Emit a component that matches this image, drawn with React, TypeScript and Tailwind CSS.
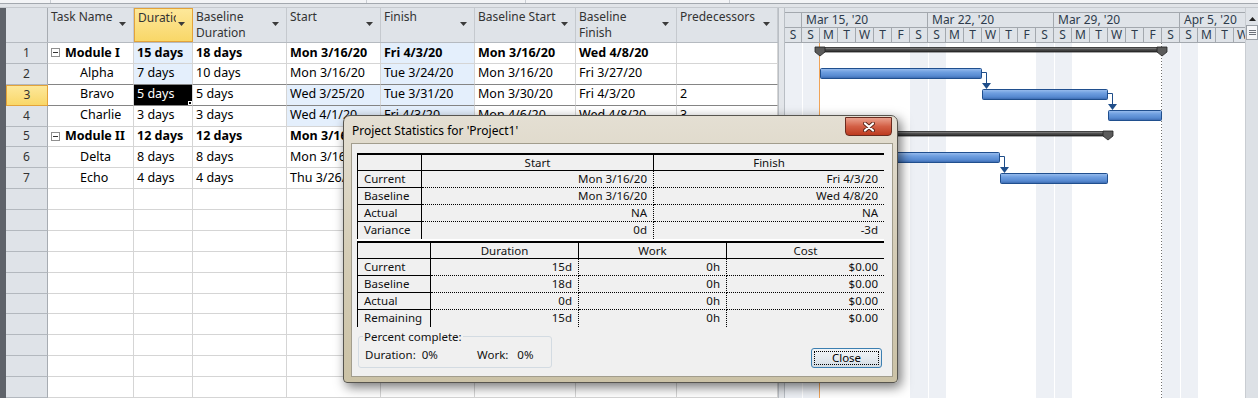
import React from 'react';

type Task = {
  id: number;
  name: string;
  summary?: boolean;
  cells: string[];
  blue: number[];
};

const tasks: Task[] = [
  { id: 1, name: 'Module I', summary: true, cells: ['15 days', '18 days', 'Mon 3/16/20', 'Fri 4/3/20', 'Mon 3/16/20', 'Wed 4/8/20', ''], blue: [0, 3] },
  { id: 2, name: 'Alpha', cells: ['7 days', '10 days', 'Mon 3/16/20', 'Tue 3/24/20', 'Mon 3/16/20', 'Fri 3/27/20', ''], blue: [0, 3] },
  { id: 3, name: 'Bravo', cells: ['5 days', '5 days', 'Wed 3/25/20', 'Tue 3/31/20', 'Mon 3/30/20', 'Fri 4/3/20', '2'], blue: [2, 3] },
  { id: 4, name: 'Charlie', cells: ['3 days', '3 days', 'Wed 4/1/20', 'Fri 4/3/20', 'Mon 4/6/20', 'Wed 4/8/20', '3'], blue: [2, 3] },
  { id: 5, name: 'Module II', summary: true, cells: ['12 days', '12 days', 'Mon 3/16/20', 'Tue 3/31/20', 'Mon 3/16/20', 'Tue 3/31/20', ''], blue: [] },
  { id: 6, name: 'Delta', cells: ['8 days', '8 days', 'Mon 3/16/20', 'Wed 3/25/20', 'Mon 3/16/20', 'Wed 3/25/20', ''], blue: [] },
  { id: 7, name: 'Echo', cells: ['4 days', '4 days', 'Thu 3/26/20', 'Tue 3/31/20', 'Thu 3/26/20', 'Tue 3/31/20', '6'], blue: [] },
];

const dataCols = ['w-[59px]', 'w-[94px]', 'w-[94px]', 'w-[94px]', 'w-[101px]', 'w-[101px]', 'w-[101px]'];
const headCols = ['w-[86px]', ...dataCols];
const headers = [['Task Name'], ['Duration'], ['Baseline', 'Duration'], ['Start'], ['Finish'], ['Baseline Start'], ['Baseline', 'Finish'], ['Predecessors']];

function Caret() {
  return (
    <svg width="7" height="4" viewBox="0 0 7 4">
      <polygon points="0,0 7,0 3.5,4" fill="#3a3a3a" />
    </svg>
  );
}

function TopStrip() {
  return (
    <div className="h-[8px] flex flex-col">
      <div className="h-[3px] bg-[#f3f4f6] flex">
        <div className="w-[51px] border-r border-[#c9cdd2]" />
        <div className="w-[316px] border-r border-[#c9cdd2]" />
        <div className="w-[159px] border-r border-[#c9cdd2]" />
        <div className="w-[204px] border-r border-[#c9cdd2]" />
      </div>
      <div className="h-[1px] bg-[#a3a8ae]" />
      <div className="h-[3px] bg-[#e1e4e8]" />
      <div className="h-[1px] bg-[#c5c9ce]" />
    </div>
  );
}

function HeaderCell({ w, lines, active }: { w: string; lines: string[]; active?: boolean }) {
  return (
    <div
      className={`${w} shrink-0 h-full flex ${
        active
          ? 'border border-[#e3a33a] bg-gradient-to-b from-[#fde89a] to-[#f9d767]'
          : 'border-r border-[#c5c9ce]'
      }`}
    >
      <div className="flex-1 min-w-0 overflow-hidden whitespace-nowrap pl-[3px] pt-[1px] leading-[16px] text-[12px] text-[#333]">
        {lines.map((l) => (
          <div key={l}>{l}</div>
        ))}
      </div>
      <div className="flex items-center pl-[2px] pr-[7px] pb-[2px]">
        <Caret />
      </div>
    </div>
  );
}

function TaskRow({ t }: { t: Task }) {
  const sel = t.id === 3;
  const dark = t.id === 2 || t.id === 3;
  const rowB = dark ? 'border-b-[#858585]' : 'border-b-[#d5d5d5]';
  return (
    <div className={`flex h-[21px] text-[12.5px] ${t.summary ? 'font-bold' : ''}`}>
      <div
        className={`w-[42px] shrink-0 flex items-center justify-center font-normal text-[12px] text-[#333] ${
          sel
            ? 'border border-[#e3a33a] bg-gradient-to-b from-[#fde89a] to-[#f9d767]'
            : 'bg-[#dfe3e8] border-r border-b border-r-[#a7acb2] border-b-[#b3b8be]'
        }`}
      >
        {t.id}
      </div>
      <div className={`w-[86px] shrink-0 h-full flex items-center whitespace-nowrap overflow-hidden border-r border-b border-r-[#d5d5d5] ${rowB} ${t.summary ? 'pl-[3px]' : 'pl-[32px]'}`}>
        {t.summary && (
          <span className="w-[9px] h-[9px] border border-[#8f8f8f] bg-white flex items-center justify-center mr-[5px]">
            <span className="w-[5px] h-[1px] bg-[#333]" />
          </span>
        )}
        {t.name}
      </div>
      {t.cells.map((c, i) => {
        const picked = sel && i === 0;
        const blue = t.blue.includes(i);
        return (
          <div
            key={i}
            className={`${dataCols[i]} shrink-0 h-full relative flex items-center whitespace-nowrap overflow-hidden pl-[3px] border-r border-b border-r-[#d5d5d5] ${rowB} ${
              picked ? 'bg-black text-white' : blue ? 'bg-[#e4effc]' : ''
            }`}
          >
            {c}
            {picked && <span className="absolute right-0 bottom-0 w-[4px] h-[4px] bg-black border border-white" />}
          </div>
        );
      })}
    </div>
  );
}

function BlankRow() {
  return (
    <div className="flex h-[21px]">
      <div className="w-[42px] shrink-0 bg-[#dfe3e8] border-r border-b border-r-[#a7acb2] border-b-[#b3b8be]" />
      {headCols.map((w, i) => (
        <div key={i} className={`${w} shrink-0 h-full border-r border-b border-[#d5d5d5]`} />
      ))}
    </div>
  );
}

function Grid() {
  return (
    <div className="w-[772px] shrink-0 flex flex-col overflow-hidden">
      <div className="flex h-[35px] shrink-0 bg-[#dfe3e8] border-b border-[#b5bac0]">
        <div className="w-[42px] shrink-0 border-r border-[#a7acb2]" />
        {headers.map((h, i) => (
          <HeaderCell key={i} w={headCols[i]} lines={h} active={i === 1} />
        ))}
      </div>
      {tasks.map((t) => (
        <TaskRow key={t.id} t={t} />
      ))}
      {Array.from({ length: 10 }).map((_, i) => (
        <BlankRow key={i} />
      ))}
    </div>
  );
}

const weeks = ["Mar 15, '20", "Mar 22, '20", "Mar 29, '20", "Apr 5, '20"];
const dayLetters = ['S', 'M', 'T', 'W', 'T', 'F', 'S'];

function TaskBar({ x1, x2, y }: { x1: number; x2: number; y: number }) {
  return <rect x={x1 + 0.5} y={y + 0.5} width={x2 - x1 - 1} height={10} rx={1} fill="url(#taskGrad)" stroke="#204f8e" />;
}

function SummaryBar({ x1, x2, y }: { x1: number; x2: number; y: number }) {
  const cap = (x: number) => `${x - 5},${y} ${x + 5},${y} ${x + 5},${y + 5} ${x},${y + 9} ${x - 5},${y + 5}`;
  return (
    <g>
      <rect x={x1} y={y + 0.5} width={x2 - x1} height={4.5} fill="url(#sumGrad)" stroke="#222" strokeWidth={0.8} />
      <polygon points={cap(x1)} fill="#5b5b5b" stroke="#222" strokeWidth={0.8} />
      <polygon points={cap(x2)} fill="#5b5b5b" stroke="#222" strokeWidth={0.8} />
    </g>
  );
}

function Link({ x, y1, y2 }: { x: number; y1: number; y2: number }) {
  return (
    <g>
      <path d={`M${x - 5} ${y1 + 0.5} H${x + 0.5} V${y2 - 5}`} stroke="#1f4e8a" fill="none" />
      <polygon points={`${x - 4},${y2 - 6} ${x + 5},${y2 - 6} ${x + 0.5},${y2}`} fill="#1f4e8a" />
    </g>
  );
}

function Gantt() {
  // days: Sun Mar 15 = day 0, starts 17px into the chart, 18px per day
  const dx = (k: number) => 17 + 18 * k;
  const weekend = [-1, 0, 6, 7, 13, 14, 20, 21];
  return (
    <div className="w-[460px] shrink-0 flex flex-col overflow-hidden">
      <div className="h-[35px] shrink-0 bg-[#dfe3e8] pt-[4px] text-[12px] text-[#2d3b4c]">
        <div className="flex h-[16px] border-t border-b border-[#a3a8ae]">
          <div className="w-[17px] shrink-0 border-r border-[#a3a8ae]" />
          {weeks.map((w) => (
            <div key={w} className="w-[126px] shrink-0 border-r border-[#a3a8ae] pl-[4px] leading-[14px] whitespace-nowrap">
              {w}
            </div>
          ))}
        </div>
        <div className="flex h-[15px] border-b border-[#a3a8ae]">
          <div className="w-[17px] shrink-0 border-r border-[#a3a8ae] text-center leading-[14px]">S</div>
          {Array.from({ length: 25 }).map((_, i) => (
            <div key={i} className="w-[18px] shrink-0 border-r border-[#a3a8ae] text-center leading-[14px]">
              {dayLetters[i % 7]}
            </div>
          ))}
        </div>
      </div>
      <svg width="460" height="355" className="block">
        <defs>
          <linearGradient id="taskGrad" x1="0" y1="0" x2="0" y2="1">
            <stop offset="0" stopColor="#9cbfee" />
            <stop offset="0.35" stopColor="#6f9fe0" />
            <stop offset="0.75" stopColor="#5689d0" />
            <stop offset="1" stopColor="#3966ab" />
          </linearGradient>
          <linearGradient id="sumGrad" x1="0" y1="0" x2="0" y2="1">
            <stop offset="0" stopColor="#9a9a9a" />
            <stop offset="0.45" stopColor="#4e4e4e" />
            <stop offset="1" stopColor="#2a2a2a" />
          </linearGradient>
        </defs>
        {weekend.map((k) => (
          <rect key={k} x={k === -1 ? 0 : dx(k)} y={0} width={k === -1 ? 17 : 18} height={355} fill="#edf0f5" />
        ))}
        {[17, 143, 269, 395].map((x) => (
          <rect key={x} x={x} y={0} width={1} height={355} fill="#ffffff" />
        ))}
        <line x1={34.5} y1={0} x2={34.5} y2={355} stroke="#f0a458" />
        <line x1={376.5} y1={0} x2={376.5} y2={355} stroke="#6f6f6f" strokeDasharray="1 2" />
        <SummaryBar x1={35} x2={377} y={4} />
        <TaskBar x1={35} x2={197} y={25} />
        <Link x={201} y1={29} y2={46} />
        <TaskBar x1={197} x2={323} y={46} />
        <Link x={327} y1={50} y2={67} />
        <TaskBar x1={323} x2={377} y={67} />
        <SummaryBar x1={35} x2={323} y={88} />
        <TaskBar x1={35} x2={215} y={109} />
        <Link x={219} y1={113} y2={130} />
        <TaskBar x1={215} x2={323} y={130} />
      </svg>
    </div>
  );
}

function Scrollbar() {
  return (
    <div className="w-[13px] shrink-0 flex flex-col bg-[#dfe3e8] border-l border-[#c9cdd2]">
      <div className="h-[4px]" />
      <div className="h-[13px] flex items-center justify-center">
        <svg width="7" height="4" viewBox="0 0 7 4">
          <polygon points="0,4 7,4 3.5,0" fill="#222" />
        </svg>
      </div>
      <div className="h-[15px] border border-[#9aa0a7] bg-[#f5f6f8] flex flex-col items-center justify-center gap-[1px]">
        <span className="w-[7px] h-[1px] bg-[#6b7079]" />
        <span className="w-[7px] h-[1px] bg-[#6b7079]" />
        <span className="w-[7px] h-[1px] bg-[#6b7079]" />
      </div>
      <div className="flex-1 bg-[#dde1e6]" />
    </div>
  );
}

function StatRow({ label, values, widths, last }: { label: string; values: string[]; widths: string[]; last?: boolean }) {
  return (
    <div className="flex h-[17px]">
      <div className={`${widths[0]} shrink-0 pl-[6px] leading-[16px] border-r border-black ${last ? '' : 'border-b'}`}>{label}</div>
      {values.map((v, i) => (
        <div
          key={i}
          className={`${widths[i + 1]} shrink-0 text-right pr-[6px] leading-[16px] border-dotted border-black ${
            i < values.length - 1 ? 'border-r' : ''
          } ${last ? '' : 'border-b'}`}
        >
          {v}
        </div>
      ))}
    </div>
  );
}

function StatTable({ heads, widths, rows }: { heads: string[]; widths: string[]; rows: [string, string[]][] }) {
  return (
    <div className="w-[527px] bg-[#f0f0f0] border-l border-black">
      <div className="flex h-[18px] border-t-2 border-b border-black">
        <div className={`${widths[0]} shrink-0 border-r border-black`} />
        {heads.map((h, i) => (
          <div key={h} className={`${widths[i + 1]} shrink-0 text-center leading-[15px] ${i < heads.length - 1 ? 'border-r border-black' : ''}`}>
            {h}
          </div>
        ))}
      </div>
      {rows.map(([l, v], i) => (
        <StatRow key={l} label={l} values={v} widths={widths} last={i === rows.length - 1} />
      ))}
    </div>
  );
}

function CloseX() {
  return (
    <svg width="12" height="10" viewBox="0 0 12 10">
      <path d="M2 1.5 L10 8.5 M10 1.5 L2 8.5" stroke="#5a2418" strokeWidth="4" strokeLinecap="round" />
      <path d="M2 1.5 L10 8.5 M10 1.5 L2 8.5" stroke="#ffffff" strokeWidth="2.2" strokeLinecap="round" />
    </svg>
  );
}

function StatsDialog() {
  return (
    <div className="absolute left-[343px] top-[115px] w-[555px] h-[268px] flex flex-col rounded-t-[7px] rounded-b-[4px] border border-[#57554f] bg-gradient-to-b from-[#e4dfd3] via-[#d5cdb7] to-[#cbc2a6] shadow-[3px_4px_12px_rgba(0,0,0,0.55)] text-[11.5px] text-[#111]">
      <div className="h-[27px] shrink-0 flex items-center pl-[8px] pt-[2px] text-[12px] text-black">
        Project Statistics for 'Project1'
      </div>
      <div className="absolute right-[5px] top-[1px] w-[47px] h-[19px] rounded-b-[4px] border border-[#6a2b1f] bg-gradient-to-b from-[#eaa08d] via-[#d35f45] to-[#bd3a1e] flex items-center justify-center">
        <CloseX />
      </div>
      <div className="flex-1 ml-[7px] mr-[4px] mb-[5px] bg-[#f0f0f0] border border-[#a29d8d] flex flex-col pl-[5px] pt-[9px]">
        <StatTable
          heads={['Start', 'Finish']}
          widths={['w-[64px]', 'w-[232px]', 'w-[230px]']}
          rows={[
            ['Current', ['Mon 3/16/20', 'Fri 4/3/20']],
            ['Baseline', ['Mon 3/16/20', 'Wed 4/8/20']],
            ['Actual', ['NA', 'NA']],
            ['Variance', ['0d', '-3d']],
          ]}
        />
        <div className="w-[527px] h-[2px] bg-white" />
        <StatTable
          heads={['Duration', 'Work', 'Cost']}
          widths={['w-[73px]', 'w-[148px]', 'w-[148px]', 'w-[157px]']}
          rows={[
            ['Current', ['15d', '0h', '$0.00']],
            ['Baseline', ['18d', '0h', '$0.00']],
            ['Actual', ['0d', '0h', '$0.00']],
            ['Remaining', ['15d', '0h', '$0.00']],
          ]}
        />
        <div className="w-[527px] mt-[9px] flex items-end justify-between">
          <div className="relative ml-[1px] w-[194px] h-[32px] rounded-[3px] border border-[#d3dbe2] flex items-end pb-[4px] pl-[6px]">
            <span className="absolute -top-[9px] left-[4px] px-[1px] bg-[#f0f0f0]">Percent complete:</span>
            <span className="w-[112px]">Duration:&nbsp;&nbsp;0%</span>
            <span>Work:&nbsp;&nbsp;&nbsp;0%</span>
          </div>
          <div className="mr-[2px] w-[71px] h-[20px] rounded-[3px] border border-[#3c7fb1] bg-gradient-to-b from-[#f1f4f7] via-[#e6ebf0] to-[#d2dbe3] p-[2px]">
            <div className="w-full h-full border border-dotted border-black flex items-center justify-center text-black">
              Close
            </div>
          </div>
        </div>
      </div>
    </div>
  );
}

export default function App() {
  return (
    <div className="relative w-[1258px] h-[398px] overflow-hidden bg-white font-['Noto_Sans',sans-serif] text-[12px] text-black">
      <TopStrip />
      <div className="flex h-[390px]">
        <div className="w-[6px] shrink-0 bg-[#5f636a]" />
        <Grid />
        <div className="w-[7px] shrink-0 bg-[#e3e6ea] border-l border-r border-[#b9bec4]" />
        <Gantt />
        <Scrollbar />
      </div>
      <StatsDialog />
    </div>
  );
}
